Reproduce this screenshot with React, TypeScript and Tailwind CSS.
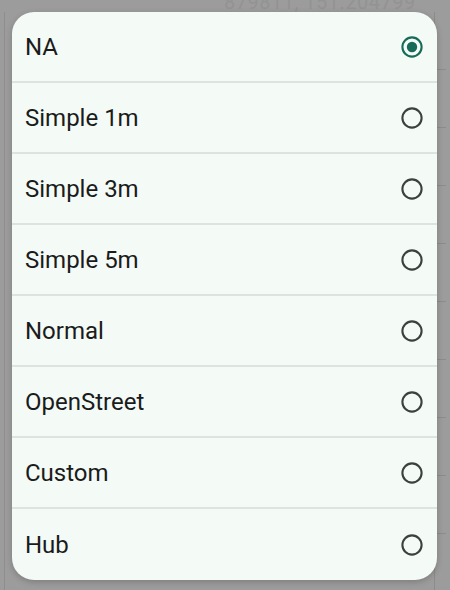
import React from "react";

const options = ["NA", "Simple 1m", "Simple 3m", "Simple 5m", "Normal", "OpenStreet", "Custom", "Hub"];

function Radio({ checked }: { checked: boolean }) {
  return (
    <svg width="22" height="22" viewBox="0 0 22 22">
      <circle cx="11" cy="11" r="9.6" fill="none" stroke={checked ? "#176b58" : "#3c403e"} strokeWidth="2.1" />
      {checked && <circle cx="11" cy="11" r="5.2" fill="#176b58" />}
    </svg>
  );
}

export default function App() {
  return (
    <div
      className="relative w-[450px] h-[590px] overflow-hidden bg-[#9c9c9c]"
      style={{ fontFamily: "Roboto, 'Liberation Sans', sans-serif" }}
    >
      {/* dimmed page underneath */}
      <div className="flex h-full flex-col px-[4px]">
        <div className="flex h-[12px] items-end pl-[220px] text-[20px] leading-none text-[#939393]">
          <span className="tracking-wide">879811, 151.204799</span>
        </div>
        <div className="flex flex-1 gap-[2px]">
          <div className="flex-1 border-l border-[#8e8e8e]" />
          <div className="flex w-[12px] flex-col">
            {Array.from({ length: 10 }).map((_, i) => (
              <div key={i} className="h-[58px] border-b border-l border-[#8c8c8c]" />
            ))}
          </div>
        </div>
        <div className="h-[12px] pl-[8px] text-[17px] leading-[14px] text-[#3f3f3f]">Addition Marker</div>
      </div>

      {/* dialog */}
      <div className="absolute left-[12px] top-[12px] flex h-[568px] w-[425px] flex-col overflow-hidden rounded-[22px] bg-[#f4faf6] shadow-[0_2px_6px_rgba(0,0,0,0.2)]">
        {options.map((o, i) => (
          <div
            key={o}
            className={`flex h-[71px] shrink-0 items-center justify-between pl-[13px] pr-[14px] ${
              i < options.length - 1 ? "border-b-2 border-[#dde3df]" : ""
            }`}
          >
            <span className="text-[24px] leading-none text-[#1a1c1b]">{o}</span>
            <Radio checked={i === 0} />
          </div>
        ))}
      </div>
    </div>
  );
}
